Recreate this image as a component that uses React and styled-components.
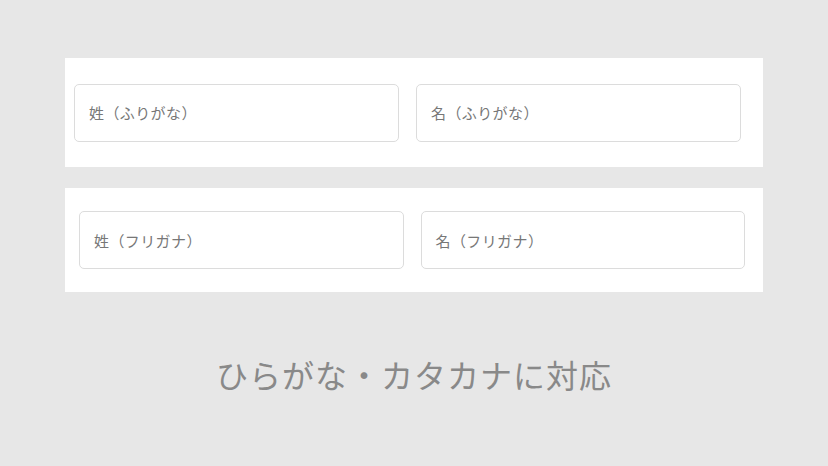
import React from "react";
import styled, { createGlobalStyle } from "styled-components";

const Global = createGlobalStyle`
  html, body { margin: 0; padding: 0; background: #e7e7e7; }
  body { font-family: "Noto Sans CJK JP", "Noto Sans", sans-serif; }
`;

const Page = styled.div`
  width: 828px;
  height: 466px;
  box-sizing: border-box;
  padding: 58px 65px 0;
  display: flex;
  flex-direction: column;
  gap: 21px;
`;

const Panel = styled.div`
  background: #fff;
  height: ${(p) => p.$h}px;
  box-sizing: border-box;
  padding: 0 ${(p) => p.$pr}px 0 ${(p) => p.$pl}px;
  display: flex;
  align-items: center;
  gap: 17px;
`;

const Field = styled.div`
  flex: 1;
  height: 58px;
  box-sizing: border-box;
  border: 1px solid #dcdcdc;
  border-radius: 5px;
  padding-left: 14px;
  display: flex;
  align-items: center;
  font-size: 15px;
  color: #777;
  letter-spacing: 0.4px;
`;

const Caption = styled.div`
  margin-top: 37px;
  text-align: center;
  font-size: 32px;
  line-height: 48px;
  color: #898989;
  letter-spacing: 1px;
`;

export default function App() {
  return (
    <>
      <Global />
      <Page>
        <Panel $h={109} $pl={9} $pr={22}>
          <Field>姓（ふりがな）</Field>
          <Field>名（ふりがな）</Field>
        </Panel>
        <Panel $h={104} $pl={14} $pr={18}>
          <Field>姓（フリガナ）</Field>
          <Field>名（フリガナ）</Field>
        </Panel>
        <Caption>ひらがな・カタカナに対応</Caption>
      </Page>
    </>
  );
}
